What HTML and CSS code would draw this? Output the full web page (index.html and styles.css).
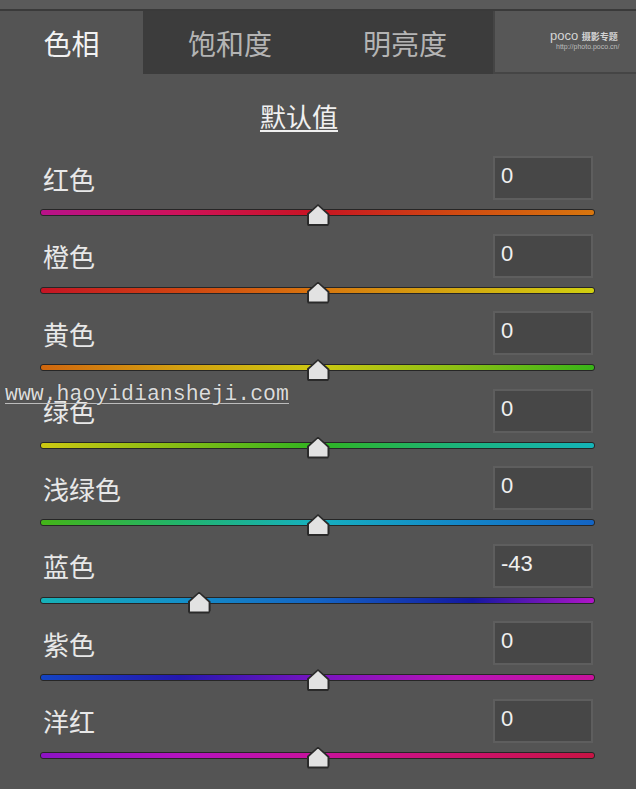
FILE: index.html
```html
<!DOCTYPE html>
<html lang="zh-CN">

<head>
    <meta charset="UTF-8">
    <meta name="viewport" content="width=device-width, initial-scale=1.0">
    <title>色相/饱和度</title>
    <link rel="stylesheet" href="styles.css">
</head>

<body>
    <section class="panel">

        <div class="topbar"></div>

        <div class="tabs">
            <div class="tab active">色相</div>
            <div class="tab tab-sat">饱和度</div>
            <div class="tab tab-lum">明亮度</div>
            <div class="brand">
                <div class="brand-name">poco <span>摄影专题</span></div>
                <div class="brand-url">http://photo.poco.cn/</div>
            </div>
        </div>

        <div class="reset"><a href="#">默认值</a></div>

        <div class="rows">
            <div class="row">
                <div class="head"><span class="label">红色</span><div class="num">0</div></div>
                <div class="track red"><span class="thumb" style="left: 50%"></span></div>
            </div>
            <div class="row">
                <div class="head"><span class="label">橙色</span><div class="num">0</div></div>
                <div class="track orange"><span class="thumb" style="left: 50%"></span></div>
            </div>
            <div class="row">
                <div class="head"><span class="label">黄色</span><div class="num">0</div></div>
                <div class="track yellow"><span class="thumb" style="left: 50%"></span></div>
            </div>
            <div class="row">
                <div class="head"><span class="label">绿色</span><div class="num">0</div></div>
                <div class="track green"><span class="thumb" style="left: 50%"></span></div>
            </div>
            <div class="row">
                <div class="head"><span class="label">浅绿色</span><div class="num">0</div></div>
                <div class="track aqua"><span class="thumb" style="left: 50%"></span></div>
            </div>
            <div class="row">
                <div class="head"><span class="label">蓝色</span><div class="num">-43</div></div>
                <div class="track blue"><span class="thumb" style="left: 28.5%"></span></div>
            </div>
            <div class="row">
                <div class="head"><span class="label">紫色</span><div class="num">0</div></div>
                <div class="track purple"><span class="thumb" style="left: 50%"></span></div>
            </div>
            <div class="row">
                <div class="head"><span class="label">洋红</span><div class="num">0</div></div>
                <div class="track magenta"><span class="thumb" style="left: 50%"></span></div>
            </div>
        </div>

        <div class="stamp">www.haoyidiansheji.com</div>

    </section>
</body>

</html>
```

FILE: styles.css
```css
:root {
    --panel: #545454;
    --tab-dark: #3c3c3c;
    --text: #e8e8e8;
    --text-dim: #b4b4b4;
    --cjk: "Noto Sans CJK SC", "Noto Sans", sans-serif;
}

body {
    margin: 0;
    background-color: var(--panel);
}

.panel {
    position: relative;
    width: 636px;
    height: 789px;
    overflow: hidden;
    background-color: var(--panel);
    font-family: var(--cjk);
    color: var(--text);
}

.topbar {
    height: 9px;
    background-color: #5a5a5a;
    border-bottom: 2px solid #3a3a3a;
}

.tabs {
    display: flex;
    height: 63px;
}

.tab {
    display: flex;
    align-items: center;
    justify-content: center;
    font-size: 28px;
    color: var(--text-dim);
    background-color: var(--tab-dark);
}

.tab.active {
    width: 143px;
    color: #f2f2f2;
    background-color: var(--panel);
}

.tab-sat {
    width: 174px;
}

.tab-lum {
    width: 176px;
}

.brand {
    flex: 1;
    display: flex;
    flex-direction: column;
    justify-content: center;
    padding-left: 55px;
    background-color: #575757;
    border-left: 2px solid #454545;
    border-bottom: 2px solid #454545;
    color: #d4d4d4;
}

.brand-name {
    font-family: "Liberation Sans", sans-serif;
    font-size: 13px;
    line-height: 12px;
}

.brand-name span {
    font-family: var(--cjk);
    font-size: 9px;
    font-weight: bold;
}

.brand-url {
    font-family: "Liberation Sans", sans-serif;
    font-size: 7px;
    line-height: 8px;
    padding-left: 6px;
    color: #bcbcbc;
    margin-bottom: 3px;
}

.reset {
    height: 82px;
    display: flex;
    align-items: center;
    justify-content: center;
    padding-right: 38px;
}

.reset a {
    font-size: 26px;
    color: #f0f0f0;
    text-decoration: underline;
    text-underline-offset: 3px;
}

.rows {
    padding: 0 41px 0 40px;
}

.row {
    height: 77.5px;
}

.head {
    display: flex;
    justify-content: space-between;
    align-items: center;
    height: 44px;
}

.label {
    font-size: 26px;
    padding-left: 3px;
}

.num {
    box-sizing: border-box;
    width: 100px;
    height: 44px;
    margin-right: 2px;
    padding: 0 0 0 6px;
    background-color: #474747;
    border: 2px solid #5e5e5e;
    font-family: "Liberation Sans", sans-serif;
    font-size: 22px;
    line-height: 36px;
    color: #f0f0f0;
}

.track {
    position: relative;
    height: 5px;
    margin-top: 9px;
    border: 1px solid #262626;
    border-radius: 3px;
}

.thumb {
    position: absolute;
    top: -6px;
    width: 23px;
    height: 22px;
    margin-left: -11px;
    background-color: #2a2a2a;
    clip-path: polygon(50% 0, 100% 45%, 100% 88%, 94% 100%, 6% 100%, 0 88%, 0 45%);
}

.thumb::after {
    content: "";
    position: absolute;
    left: 2px;
    top: 2px;
    right: 2px;
    bottom: 2px;
    background-color: #e2e2e2;
    clip-path: polygon(50% 0, 100% 48%, 100% 100%, 0 100%, 0 48%);
}

.red {
    background: linear-gradient(90deg, #b8128a 0%, #d0125a 25%, #c81422 50%, #d04a12 75%, #d8760e 100%);
}

.orange {
    background: linear-gradient(90deg, #c41424 0%, #d04412 25%, #d8760e 50%, #d4a810 75%, #d0d010 100%);
}

.yellow {
    background: linear-gradient(90deg, #d0660e 0%, #d4a010 25%, #ccc812 50%, #8cc014 75%, #38b418 100%);
}

.green {
    background: linear-gradient(90deg, #ccc812 0%, #84bc14 25%, #30b420 50%, #1cb47a 75%, #14b4b8 100%);
}

.aqua {
    background: linear-gradient(90deg, #44b418 0%, #22b46c 25%, #16b0c0 50%, #1488c8 75%, #1464c4 100%);
}

.blue {
    background: linear-gradient(90deg, #16b2b8 0%, #1490c8 25%, #1464c4 50%, #1418a0 78%, #b014c8 100%);
}

.purple {
    background: linear-gradient(90deg, #1444c4 0%, #2418b0 25%, #7814c0 50%, #b814b8 75%, #c8129c 100%);
}

.magenta {
    background: linear-gradient(90deg, #8c14c4 0%, #b414c0 25%, #c8129c 50%, #cc1270 75%, #c81444 100%);
}

/* site stamp laid over the sliders */
.stamp {
    position: absolute;
    left: 5px;
    top: 385px;
    font-family: "Liberation Mono", monospace;
    font-size: 21.5px;
    line-height: 18px;
    color: #dcdcdc;
    border-bottom: 1px solid #bcbcbc;
    text-shadow: 0 0 1px #333;
}
```
